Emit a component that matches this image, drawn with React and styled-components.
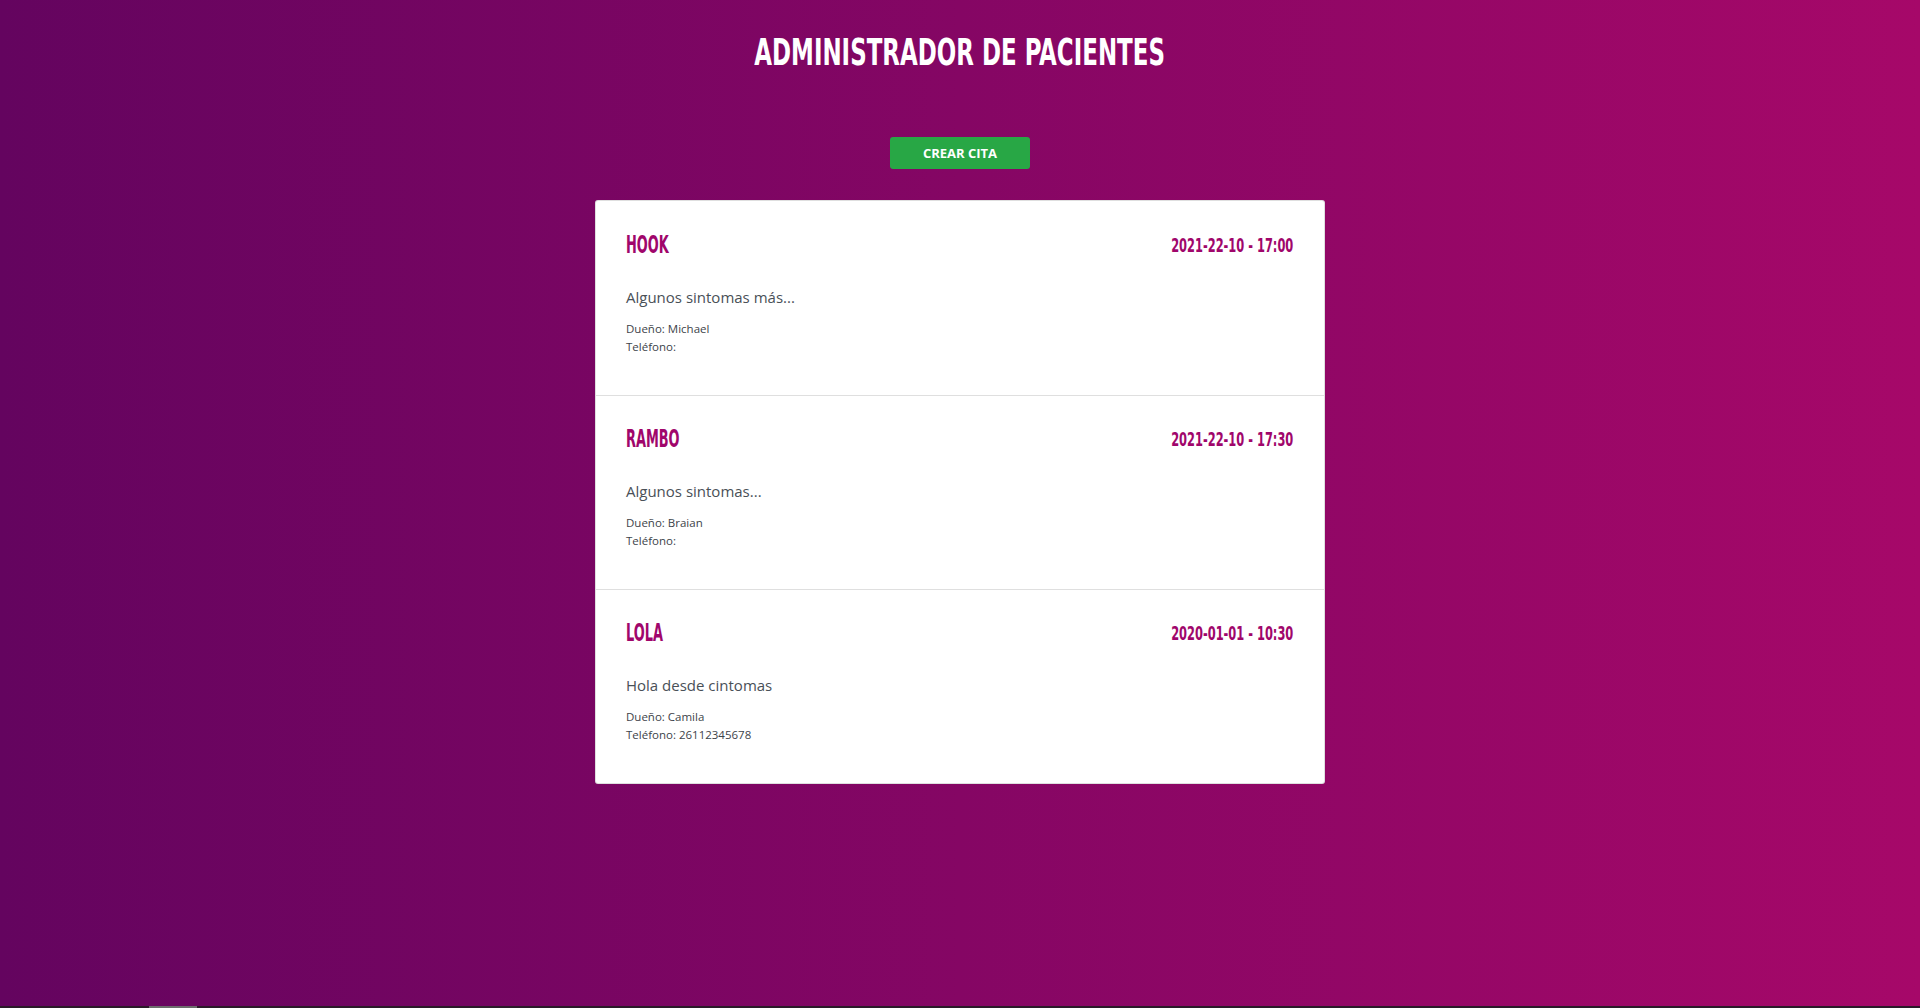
import { useState } from 'react';
import styled, { createGlobalStyle } from 'styled-components';

const GlobalStyle = createGlobalStyle`
    * {
        box-sizing: border-box;
    }
    html, body {
        margin: 0;
        padding: 0;
    }
    body {
        background: linear-gradient(to right, #64045f 0%, #a60869 100%);
        font-family: 'Open Sans', 'Noto Sans', sans-serif;
        color: #495057;
    }
`;

// fuente condensada para titulos (imita Staatliches)
const titleFont = `'Liberation Sans Narrow', 'DejaVu Sans Condensed', 'Liberation Sans', sans-serif`;

const Page = styled.div`
    min-height: 100vh;
    display: flex;
    flex-direction: column;
`;
const Main = styled.main`
    flex: 1;
    display: flex;
    flex-direction: column;
    align-items: center;
`;
const Heading = styled.h1`
    margin: 33px 0 0;
    font-family: ${titleFont};
    font-weight: 700;
    font-size: 30px;
    line-height: 37px;
    color: #fff;
    text-transform: uppercase;
    white-space: nowrap;
    transform: scale(0.85, 1.24);
`;
const Button = styled.button`
    cursor: pointer;
    margin-top: 67px;
    width: 140px;
    height: 32px;
    border: none;
    border-radius: 3px;
    background: #28a745;
    color: #fff;
    font-family: 'Open Sans', sans-serif;
    font-weight: 700;
    font-size: 13px;
    text-transform: uppercase;
    &:hover {
        background: #218838;
    }
`;
const List = styled.ul`
    list-style: none;
    margin: 31px 0 0;
    padding: 0;
    width: 730px;
    background: #fff;
    border: 1px solid rgba(0, 0, 0, 0.125);
    border-radius: 3px;
`;
const Item = styled.li`
    padding: 32px 31px 39px 30px;
    border-top: ${(props) => (props.$first ? 'none' : '1px solid #dfdfdf')};
    padding-top: ${(props) => (props.$first ? '33px' : '32px')};
`;
const Row = styled.div`
    display: flex;
    justify-content: space-between;
    align-items: flex-start;
`;
const PetName = styled.h3`
    margin: 0;
    font-family: ${titleFont};
    font-weight: 700;
    font-size: 17.5px;
    line-height: 22px;
    color: #a0066b;
    text-transform: uppercase;
    transform: scale(0.82, 1.41);
    transform-origin: left center;
`;
const DateText = styled.h3`
    margin: 0;
    font-family: ${titleFont};
    font-weight: 700;
    font-size: 17.4px;
    line-height: 22px;
    color: #a0066b;
    white-space: nowrap;
    transform: scale(0.73, 1.1);
    transform-origin: right center;
`;
const Symptoms = styled.p`
    margin: 30px 0 0;
    font-size: 15px;
    line-height: 22px;
    color: #495057;
`;
const Info = styled.div`
    margin-top: 12px;
    font-size: 11.5px;
    line-height: 18px;
    color: #3d4349;
`;
const BottomBar = styled.div`
    height: 2px;
    background: #2a1a28;
    padding-left: 149px;
`;
const Thumb = styled.div`
    width: 48px;
    height: 2px;
    background: #6c6c6c;
`;

const initialCitas = [
    { id: 1, mascota: 'Hook', fecha: '2021-22-10', hora: '17:00', sintomas: 'Algunos sintomas más...', propietario: 'Michael', telefono: '' },
    { id: 2, mascota: 'Rambo', fecha: '2021-22-10', hora: '17:30', sintomas: 'Algunos sintomas...', propietario: 'Braian', telefono: '' },
    { id: 3, mascota: 'Lola', fecha: '2020-01-01', hora: '10:30', sintomas: 'Hola desde cintomas', propietario: 'Camila', telefono: '26112345678' },
];

function App() {
    const [citas] = useState(initialCitas);
    return (
        <Page>
            <GlobalStyle />
            <Main>
                <Heading>Administrador de pacientes</Heading>
                <Button>Crear cita</Button>
                <List>
                    {citas.map((cita, i) => (
                        <Item key={cita.id} $first={i === 0}>
                            <Row>
                                <PetName>{cita.mascota}</PetName>
                                <DateText>
                                    {cita.fecha} - {cita.hora}
                                </DateText>
                            </Row>
                            <Symptoms>{cita.sintomas}</Symptoms>
                            <Info>
                                <div>Dueño: {cita.propietario}</div>
                                <div>Teléfono: {cita.telefono}</div>
                            </Info>
                        </Item>
                    ))}
                </List>
            </Main>
            <BottomBar>
                <Thumb />
            </BottomBar>
        </Page>
    );
}
export default App;
